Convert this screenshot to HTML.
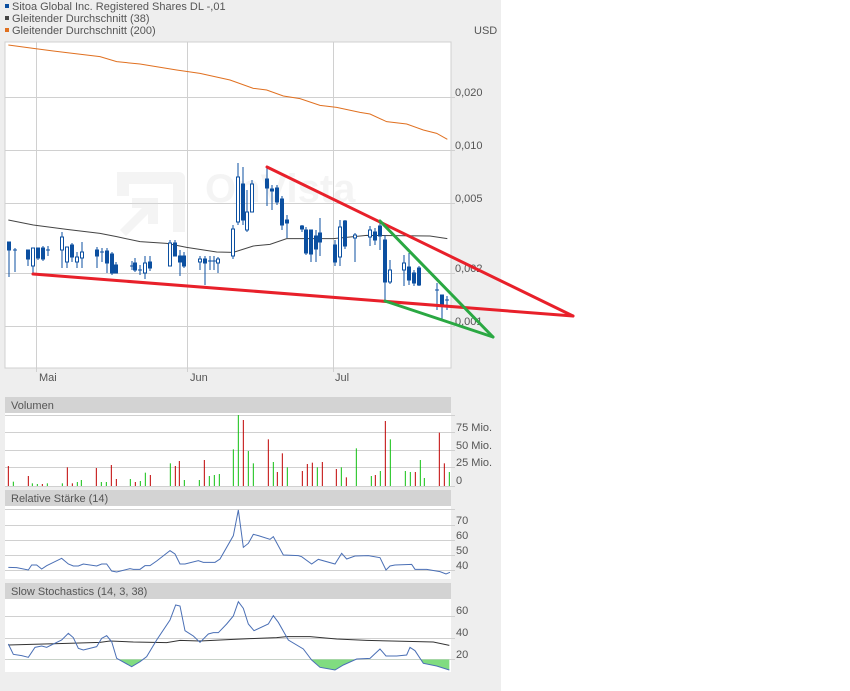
<!DOCTYPE html>
<html><head><meta charset="utf-8"><style>
html,body{margin:0;padding:0;background:#fff;width:850px;height:691px;overflow:hidden}
svg{display:block}
text{font-family:"Liberation Sans",sans-serif;font-size:11px;fill:#555}
</style></head><body>
<svg width="850" height="691" xmlns="http://www.w3.org/2000/svg">
<rect x="0" y="0" width="501" height="691" fill="#eeeeee"/>
<rect x="5" y="4" width="4" height="4" fill="#0b4fa0"/><text x="12" y="10">Sitoa Global Inc. Registered Shares DL -,01</text>
<rect x="5" y="16" width="4" height="4" fill="#444"/><text x="12" y="22">Gleitender Durchschnitt (38)</text>
<rect x="5" y="28" width="4" height="4" fill="#e07020"/><text x="12" y="34">Gleitender Durchschnitt (200)</text>
<text x="474" y="34">USD</text>
<rect x="5" y="42" width="446" height="326" fill="#fff" stroke="#d0d0d0"/>
<g stroke="#d0d0d0" stroke-width="1">
<line x1="5" y1="97.5" x2="455" y2="97.5"/><line x1="5" y1="150.5" x2="455" y2="150.5"/><line x1="5" y1="203.5" x2="455" y2="203.5"/><line x1="5" y1="273.5" x2="455" y2="273.5"/><line x1="5" y1="326.5" x2="455" y2="326.5"/>
<line x1="36.5" y1="42" x2="36.5" y2="372"/><line x1="187.5" y1="42" x2="187.5" y2="372"/><line x1="333.5" y1="42" x2="333.5" y2="372"/>
</g>
<text x="455" y="96">0,020</text><text x="455" y="149">0,010</text><text x="455" y="202">0,005</text><text x="455" y="272">0,002</text><text x="455" y="325">0,001</text>
<text x="39" y="381">Mai</text><text x="190" y="381">Jun</text><text x="335" y="381">Jul</text>
<g opacity="0.3">
<path d="M117 172 h62 a6 6 0 0 1 6 6 v54 h-12 v-48 h-44 v12 h-12 z" fill="#ddd"/>
<path d="M120 230 l22 -22 h-10 v-10 h26 v26 h-10 v-10 l-22 22 z" fill="#ddd"/>
<text x="205" y="202" style="font-size:40px;font-weight:bold;fill:#ddd">OnVista</text>
</g>
<g transform="scale(0.33333)" fill="none" stroke-width="3">
<polyline stroke="#e07020" points="25,135 100,145 160,153 200,158 300,170 350,185 420,192 530,210 600,220 690,240 760,265 800,270 850,288 900,296 960,316 1010,322 1080,337 1110,342 1160,365 1220,372 1270,390 1310,400 1342,418"/>
<polyline stroke="#444" points="25,660 100,675 200,688 300,700 350,710 420,725 500,730 560,742 650,756 700,757 760,738 810,733 860,716 1000,716 1100,706 1290,708 1342,716"/>
</g>
<g stroke="#0b4fa0" stroke-width="1" fill="#0b4fa0">
<line x1="9" y1="242" x2="9" y2="277"/><rect x="7.5" y="242" width="3" height="8"/>
<line x1="15" y1="248" x2="15" y2="272"/><line x1="13" y1="250" x2="17" y2="250"/>
<line x1="28" y1="250" x2="28" y2="266"/><rect x="26.5" y="250" width="3" height="9"/>
<line x1="33" y1="248" x2="33" y2="273"/><rect x="31.5" y="248" width="3" height="18" fill="#fff"/>
<line x1="38" y1="248" x2="38" y2="260"/><rect x="36.5" y="248" width="3" height="10"/>
<line x1="43" y1="246" x2="43" y2="261"/><rect x="41.5" y="248" width="3" height="11"/>
<line x1="48" y1="246" x2="48" y2="256"/><line x1="46" y1="250" x2="50" y2="250"/>
<line x1="62" y1="232" x2="62" y2="268"/><rect x="60.5" y="237" width="3" height="13" fill="#fff"/>
<line x1="67" y1="247" x2="67" y2="268"/><rect x="65.5" y="247" width="3" height="15" fill="#fff"/>
<line x1="72" y1="243" x2="72" y2="262"/><rect x="70.5" y="245" width="3" height="12"/>
<line x1="77" y1="252" x2="77" y2="268"/><rect x="75.5" y="257" width="3" height="5" fill="#fff"/>
<line x1="82" y1="242" x2="82" y2="268"/><rect x="80.5" y="252" width="3" height="6" fill="#fff"/>
<line x1="97" y1="247" x2="97" y2="268"/><rect x="95.5" y="250" width="3" height="6"/>
<line x1="102" y1="248" x2="102" y2="262"/><line x1="100" y1="252" x2="104" y2="252"/>
<line x1="107" y1="248" x2="107" y2="273"/><rect x="105.5" y="251" width="3" height="12"/>
<line x1="112" y1="252" x2="112" y2="275"/><rect x="110.5" y="254" width="3" height="19"/>
<line x1="116" y1="262" x2="116" y2="273"/><rect x="114.5" y="265" width="3" height="8"/>
<line x1="132" y1="261" x2="132" y2="270"/><line x1="130" y1="266" x2="134" y2="266"/>
<line x1="135" y1="258" x2="135" y2="272"/><rect x="133.5" y="263" width="3" height="7"/>
<line x1="140" y1="265" x2="140" y2="275"/><line x1="138" y1="270" x2="142" y2="270"/>
<line x1="145" y1="256" x2="145" y2="279"/><rect x="143.5" y="263" width="3" height="10" fill="#fff"/>
<line x1="150" y1="256" x2="150" y2="271"/><rect x="148.5" y="262" width="3" height="6"/>
<line x1="170" y1="240" x2="170" y2="266"/><rect x="168.5" y="243" width="3" height="23" fill="#fff"/>
<line x1="175" y1="240" x2="175" y2="256"/><rect x="173.5" y="243" width="3" height="13"/>
<line x1="180" y1="250" x2="180" y2="276"/><rect x="178.5" y="256" width="3" height="6"/>
<line x1="184" y1="252" x2="184" y2="268"/><rect x="182.5" y="256" width="3" height="10"/>
<line x1="200" y1="256" x2="200" y2="270"/><rect x="198.5" y="259" width="3" height="3" fill="#fff"/>
<line x1="205" y1="256" x2="205" y2="285"/><rect x="203.5" y="259" width="3" height="4"/>
<line x1="210" y1="256" x2="210" y2="270"/><line x1="208" y1="261" x2="212" y2="261"/>
<line x1="214" y1="256" x2="214" y2="270"/><line x1="212" y1="261" x2="216" y2="261"/>
<line x1="218" y1="257" x2="218" y2="273"/><rect x="216.5" y="259" width="3" height="4" fill="#fff"/>
<line x1="233" y1="225" x2="233" y2="259"/><rect x="231.5" y="229" width="3" height="27" fill="#fff"/>
<line x1="238" y1="163" x2="238" y2="225"/><rect x="236.5" y="177" width="3" height="45" fill="#fff"/>
<line x1="243" y1="167" x2="243" y2="225"/><rect x="241.5" y="184" width="3" height="36"/>
<line x1="247" y1="190" x2="247" y2="232"/><rect x="245.5" y="212" width="3" height="18" fill="#fff"/>
<line x1="252" y1="180" x2="252" y2="212"/><rect x="250.5" y="184" width="3" height="28" fill="#fff"/>
<line x1="267" y1="168" x2="267" y2="206"/><rect x="265.5" y="179" width="3" height="9"/>
<line x1="272" y1="185" x2="272" y2="210"/><rect x="270.5" y="189" width="3" height="2"/>
<line x1="277" y1="185" x2="277" y2="205"/><rect x="275.5" y="188" width="3" height="14"/>
<line x1="282" y1="196" x2="282" y2="230"/><rect x="280.5" y="199" width="3" height="26"/>
<line x1="287" y1="215" x2="287" y2="238"/><rect x="285.5" y="220" width="3" height="3"/>
<line x1="302" y1="225" x2="302" y2="232"/><rect x="300.5" y="226" width="3" height="3"/>
<line x1="306" y1="227" x2="306" y2="255"/><rect x="304.5" y="230" width="3" height="23"/>
<line x1="311" y1="230" x2="311" y2="262"/><rect x="309.5" y="230" width="3" height="24"/>
<line x1="316" y1="230" x2="316" y2="262"/><rect x="314.5" y="236" width="3" height="13"/>
<line x1="320" y1="218" x2="320" y2="256"/><rect x="318.5" y="233" width="3" height="9"/>
<line x1="335" y1="240" x2="335" y2="266"/><rect x="333.5" y="245" width="3" height="17"/>
<line x1="340" y1="220" x2="340" y2="266"/><rect x="338.5" y="227" width="3" height="30" fill="#fff"/>
<line x1="345" y1="220" x2="345" y2="249"/><rect x="343.5" y="221" width="3" height="25"/>
<line x1="355" y1="233" x2="355" y2="262"/><rect x="353.5" y="235" width="3" height="3" fill="#fff"/>
<line x1="370" y1="226" x2="370" y2="246"/><rect x="368.5" y="230" width="3" height="7" fill="#fff"/>
<line x1="375" y1="228" x2="375" y2="245"/><rect x="373.5" y="232" width="3" height="8"/>
<line x1="380" y1="222" x2="380" y2="250"/><rect x="378.5" y="226" width="3" height="10"/>
<line x1="385" y1="235" x2="385" y2="302"/><rect x="383.5" y="240" width="3" height="42"/>
<line x1="390" y1="260" x2="390" y2="284"/><rect x="388.5" y="270" width="3" height="12" fill="#fff"/>
<line x1="404" y1="255" x2="404" y2="286"/><rect x="402.5" y="263" width="3" height="7" fill="#fff"/>
<line x1="409" y1="253" x2="409" y2="285"/><rect x="407.5" y="267" width="3" height="13"/>
<line x1="414" y1="270" x2="414" y2="286"/><rect x="412.5" y="273" width="3" height="10"/>
<line x1="419" y1="266" x2="419" y2="286"/><rect x="417.5" y="268" width="3" height="17"/>
<line x1="437" y1="283" x2="437" y2="310"/><line x1="435" y1="290" x2="439" y2="290"/>
<line x1="442" y1="295" x2="442" y2="320"/><rect x="440.5" y="295" width="3" height="10"/>
<line x1="447" y1="296" x2="447" y2="310"/><line x1="445" y1="300" x2="449" y2="300"/>
</g>
<g stroke-width="3" stroke-linecap="round">
<line x1="33" y1="274" x2="573" y2="316" stroke="#e8202a"/>
<line x1="267" y1="167" x2="573" y2="316" stroke="#e8202a"/>
<line x1="380" y1="221" x2="493" y2="337" stroke="#2aa842"/>
<line x1="385" y1="301" x2="493" y2="337" stroke="#2aa842"/>
</g>
<rect x="5" y="397" width="446" height="16" fill="#d3d3d3"/>
<text x="11" y="409">Volumen</text>
<rect x="5" y="413" width="446" height="73" fill="#fff"/>
<g stroke="#d0d0d0"><line x1="5" y1="415.5" x2="455" y2="415.5"/><line x1="5" y1="432.5" x2="455" y2="432.5"/><line x1="5" y1="450.5" x2="455" y2="450.5"/><line x1="5" y1="467.5" x2="455" y2="467.5"/><line x1="5" y1="486.5" x2="455" y2="486.5"/></g>
<text x="456" y="431">75 Mio.</text><text x="456" y="449">50 Mio.</text><text x="456" y="466">25 Mio.</text><text x="456" y="484">0</text>
<g transform="translate(0,390) scale(0.33333)" stroke-width="3">
<g stroke="#c00000">
<line x1="25" y1="228" x2="25" y2="288"/><line x1="85" y1="258" x2="85" y2="288"/><line x1="127" y1="282" x2="127" y2="288"/><line x1="202" y1="232" x2="202" y2="288"/><line x1="217" y1="280" x2="217" y2="288"/><line x1="289" y1="234" x2="289" y2="288"/><line x1="334" y1="225" x2="334" y2="288"/><line x1="349" y1="267" x2="349" y2="288"/><line x1="406" y1="276" x2="406" y2="288"/><line x1="451" y1="255" x2="451" y2="288"/><line x1="526" y1="228" x2="526" y2="288"/><line x1="538" y1="213" x2="538" y2="288"/><line x1="613" y1="210" x2="613" y2="288"/><line x1="730" y1="90" x2="730" y2="288"/><line x1="805" y1="148" x2="805" y2="288"/><line x1="832" y1="246" x2="832" y2="288"/><line x1="847" y1="190" x2="847" y2="288"/><line x1="907" y1="243" x2="907" y2="288"/><line x1="922" y1="222" x2="922" y2="288"/><line x1="937" y1="218" x2="937" y2="288"/><line x1="967" y1="216" x2="967" y2="288"/><line x1="1009" y1="237" x2="1009" y2="288"/><line x1="1039" y1="262" x2="1039" y2="288"/><line x1="1126" y1="255" x2="1126" y2="288"/><line x1="1156" y1="93" x2="1156" y2="288"/><line x1="1246" y1="246" x2="1246" y2="288"/><line x1="1318" y1="128" x2="1318" y2="288"/><line x1="1333" y1="220" x2="1333" y2="288"/>
</g>
<g stroke="#10c010">
<line x1="40" y1="275" x2="40" y2="288"/><line x1="97" y1="280" x2="97" y2="288"/><line x1="112" y1="282" x2="112" y2="288"/><line x1="142" y1="280" x2="142" y2="288"/><line x1="187" y1="280" x2="187" y2="288"/><line x1="232" y1="276" x2="232" y2="288"/><line x1="244" y1="270" x2="244" y2="288"/><line x1="304" y1="276" x2="304" y2="288"/><line x1="319" y1="276" x2="319" y2="288"/><line x1="391" y1="267" x2="391" y2="288"/><line x1="421" y1="273" x2="421" y2="288"/><line x1="436" y1="248" x2="436" y2="288"/><line x1="511" y1="220" x2="511" y2="288"/><line x1="553" y1="270" x2="553" y2="288"/><line x1="598" y1="270" x2="598" y2="288"/><line x1="628" y1="258" x2="628" y2="288"/><line x1="643" y1="255" x2="643" y2="288"/><line x1="658" y1="252" x2="658" y2="288"/><line x1="700" y1="178" x2="700" y2="288"/><line x1="715" y1="75" x2="715" y2="288"/><line x1="745" y1="183" x2="745" y2="288"/><line x1="760" y1="220" x2="760" y2="288"/><line x1="820" y1="216" x2="820" y2="288"/><line x1="862" y1="232" x2="862" y2="288"/><line x1="952" y1="232" x2="952" y2="288"/><line x1="1024" y1="232" x2="1024" y2="288"/><line x1="1069" y1="175" x2="1069" y2="288"/><line x1="1114" y1="258" x2="1114" y2="288"/><line x1="1141" y1="243" x2="1141" y2="288"/><line x1="1171" y1="148" x2="1171" y2="288"/><line x1="1216" y1="243" x2="1216" y2="288"/><line x1="1231" y1="246" x2="1231" y2="288"/><line x1="1261" y1="210" x2="1261" y2="288"/><line x1="1273" y1="264" x2="1273" y2="288"/><line x1="1348" y1="246" x2="1348" y2="288"/>
</g>
</g>
<rect x="5" y="490" width="446" height="16" fill="#d3d3d3"/>
<text x="11" y="502">Relative Stärke (14)</text>
<rect x="5" y="506" width="446" height="73" fill="#fff"/>
<g stroke="#d0d0d0"><line x1="5" y1="509.5" x2="455" y2="509.5"/><line x1="5" y1="525.5" x2="455" y2="525.5"/><line x1="5" y1="540.5" x2="455" y2="540.5"/><line x1="5" y1="555.5" x2="455" y2="555.5"/><line x1="5" y1="570.5" x2="455" y2="570.5"/></g>
<text x="456" y="524">70</text><text x="456" y="539">60</text><text x="456" y="554">50</text><text x="456" y="569">40</text>
<g transform="translate(0,390) scale(0.33333)">
<polyline fill="none" stroke="#4a6fb5" stroke-width="3" points="25,532 50,533 85,540 95,525 110,525 125,537 140,527 185,505 205,522 220,528 235,528 250,522 290,528 305,522 320,522 335,543 350,546 390,536 400,538 420,538 435,527 450,527 470,513 510,482 525,492 540,522 555,522 595,512 610,517 645,517 660,507 700,437 715,360 730,472 745,460 760,433 775,437 810,448 820,440 850,495 895,497 905,500 935,522 955,508 1005,522 1025,490 1040,507 1065,498 1105,497 1140,503 1158,540 1170,528 1185,525 1235,523 1245,538 1280,538 1320,545 1338,552 1350,547"/>
</g>
<rect x="5" y="583" width="446" height="16" fill="#d3d3d3"/>
<text x="11" y="595">Slow Stochastics (14, 3, 38)</text>
<rect x="5" y="599" width="446" height="73" fill="#fff"/>
<g stroke="#d0d0d0"><line x1="5" y1="616.5" x2="455" y2="616.5"/><line x1="5" y1="638.5" x2="455" y2="638.5"/><line x1="5" y1="659.5" x2="455" y2="659.5"/></g>
<text x="456" y="614">60</text><text x="456" y="636">40</text><text x="456" y="658">20</text>
<defs><clipPath id="cl"><rect x="0" y="808" width="1400" height="100"/></clipPath></defs>
<g transform="translate(0,390) scale(0.33333)">
<polygon clip-path="url(#cl)" fill="#80dc80" points="25,808 25,762 40,793 65,797 85,802 105,772 125,768 140,772 185,750 205,730 220,743 235,775 250,780 290,770 305,745 320,737 335,755 350,805 395,830 420,815 440,800 470,750 510,690 527,645 540,648 555,722 580,738 600,757 625,732 640,728 655,728 680,702 700,678 715,635 730,655 745,702 762,722 805,702 820,677 835,697 865,750 910,777 935,810 960,832 1005,840 1030,825 1070,807 1110,805 1140,777 1158,798 1190,798 1220,795 1230,772 1245,782 1270,820 1310,828 1348,840 1348,808"/>
<polyline fill="none" stroke="#333" stroke-width="3" points="25,765 200,760 300,757 330,753 400,756 500,758 540,751 600,753 700,748 750,746 830,743 860,740 930,740 1010,747 1100,751 1300,756 1348,766"/>
<polyline fill="none" stroke="#4a6fb5" stroke-width="3" points="25,762 40,793 65,797 85,802 105,772 125,768 140,772 185,750 205,730 220,743 235,775 250,780 290,770 305,745 320,737 335,755 350,805 395,830 420,815 440,800 470,750 510,690 527,645 540,648 555,722 580,738 600,757 625,732 640,728 655,728 680,702 700,678 715,635 730,655 745,702 762,722 805,702 820,677 835,697 865,750 910,777 935,810 960,832 1005,840 1030,825 1070,807 1110,805 1140,777 1158,798 1190,798 1220,795 1230,772 1245,782 1270,820 1310,828 1348,840"/>
</g>
</svg>
</body></html>
